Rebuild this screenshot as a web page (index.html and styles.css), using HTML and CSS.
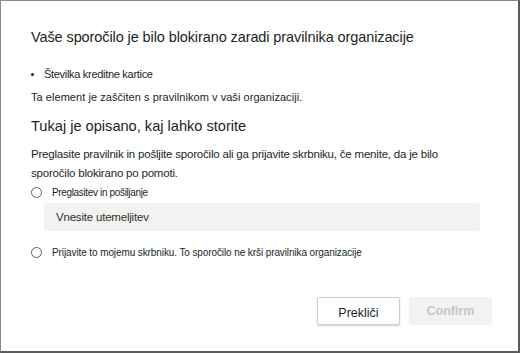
FILE: index.html
```html
<!DOCTYPE html>
<html lang="sl">
<head>
<meta charset="utf-8">
<link rel="stylesheet" href="styles.css">
</head>
<body>
<div class="dialog">
  <h1 class="title">Vaše sporočilo je bilo blokirano zaradi pravilnika organizacije</h1>
  <ul class="items">
    <li>Številka kreditne kartice</li>
  </ul>
  <p class="note">Ta element je zaščiten s pravilnikom v vaši organizaciji.</p>
  <h2 class="subtitle">Tukaj je opisano, kaj lahko storite</h2>
  <p class="desc">Preglasite pravilnik in pošljite sporočilo ali ga prijavite skrbniku, če menite, da je bilo sporočilo blokirano po pomoti.</p>
  <div class="option">
    <span class="radio"></span>
    <span class="opt-label">Preglasitev in pošiljanje</span>
  </div>
  <div class="field">Vnesite utemeljitev</div>
  <div class="option option2">
    <span class="radio"></span>
    <span class="opt-label">Prijavite to mojemu skrbniku. To sporočilo ne krši pravilnika organizacije</span>
  </div>
  <div class="actions">
    <button class="btn btn-cancel">Prekliči</button>
    <button class="btn btn-confirm">Confirm</button>
  </div>
</div>
</body>
</html>
```
FILE: styles.css
```css
html, body {
  margin: 0;
  padding: 0;
  background: #ffffff;
}
body {
  width: 520px;
  height: 353px;
  font-family: "Liberation Sans", Arial, sans-serif;
  color: #201f1e;
}
.dialog {
  box-sizing: border-box;
  width: 520px;
  height: 353px;
  border-top: 1px solid #8a8a8a;
  border-left: 1px solid #8a8a8a;
  border-right: 2px solid #5a5a5a;
  border-bottom: 2px solid #5a5a5a;
  padding: 26px 0 0 30px;
  display: flex;
  flex-direction: column;
}
.title {
  margin: 0;
  font-size: 14.5px;
  font-weight: normal;
  line-height: 20px;
  letter-spacing: -0.1px;
}
.items {
  margin: 19px 0 0 0;
  padding: 0 0 0 13px;
  font-size: 11px;
  line-height: 16px;
  letter-spacing: -0.3px;
}
.items li::marker {
  font-size: 10px;
}
.note {
  margin: 7px 0 0 0;
  font-size: 11px;
  line-height: 16px;
  letter-spacing: 0.05px;
}
.subtitle {
  margin: 11px 0 0 0;
  font-size: 14.6px;
  font-weight: normal;
  line-height: 20px;
  letter-spacing: 0;
}
.desc {
  margin: 9px 0 0 0;
  width: 430px;
  font-size: 11.5px;
  line-height: 19px;
  letter-spacing: -0.2px;
}
.option {
  margin-top: 1px;
  display: flex;
  align-items: center;
  height: 16px;
}
.radio {
  box-sizing: border-box;
  width: 11px;
  height: 11px;
  border: 1px solid #605e5c;
  border-radius: 50%;
  margin-right: 10px;
}
.opt-label {
  font-size: 10px;
  letter-spacing: -0.35px;
}
.option2 .opt-label {
  letter-spacing: -0.1px;
}
.field {
  margin: 3px 0 0 13px;
  width: 436px;
  height: 28px;
  box-sizing: border-box;
  background: #f3f2f1;
  border-radius: 2px;
  padding-left: 12px;
  display: flex;
  align-items: center;
  font-size: 11.5px;
  color: #323130;
  letter-spacing: -0.2px;
}
.option2 {
  margin-top: 13px;
}
.actions {
  margin-top: 37px;
  display: flex;
  gap: 9px;
  padding-left: 286px;
}
.btn {
  box-sizing: border-box;
  width: 83px;
  height: 28px;
  font-family: "Liberation Sans", Arial, sans-serif;
  font-size: 12.5px;
  border-radius: 2px;
  padding: 0;
}
.btn-cancel {
  background: #ffffff;
  border: 1px solid #d2d0ce;
  box-shadow: 0 1px 2px rgba(0,0,0,0.18);
  color: #201f1e;
  padding-top: 3px;
}
.btn-confirm {
  background: #f3f2f1;
  border: none;
  color: #c8c6c4;
  font-weight: bold;
}
```
